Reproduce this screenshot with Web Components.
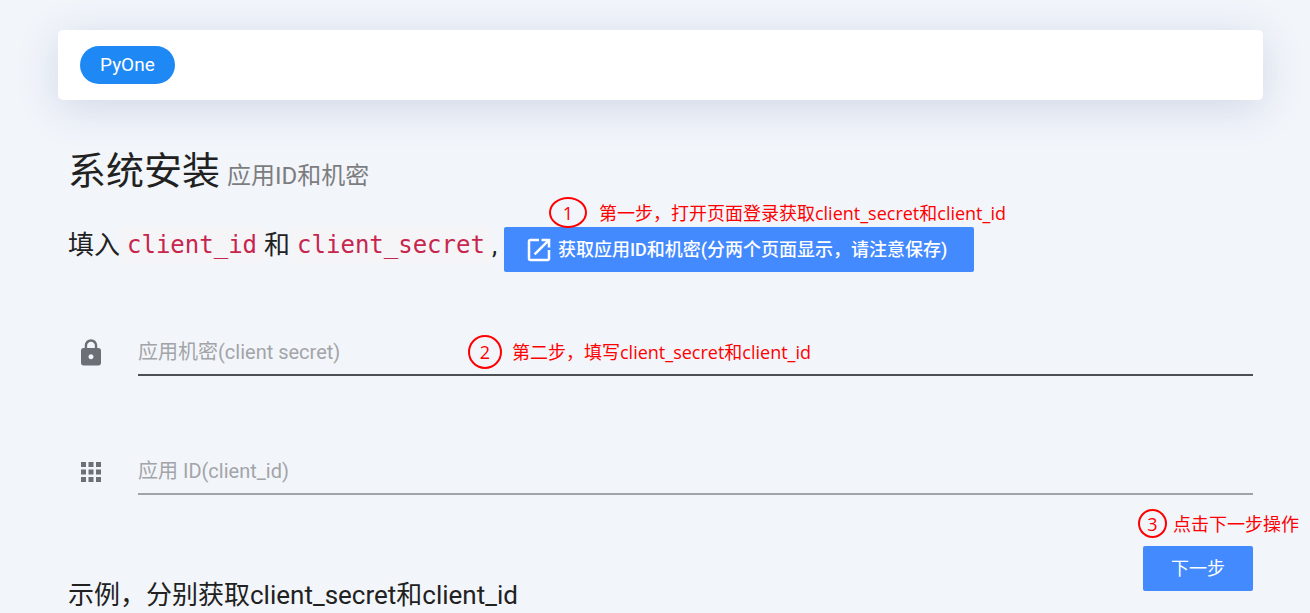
<!DOCTYPE html>
<html lang="zh-CN">
<head>
<meta charset="utf-8">
<meta name="viewport" content="width=device-width, initial-scale=1">
<title>PyOne</title>
<style>
  body {
    margin: 0;
    background: #f2f5fa;
    color: #212121;
    font-family: Roboto, "Noto Sans CJK SC", sans-serif;
    --accent: #448aff;
    --brand: #1e88f5;
    --note: #ff0000;
    --note-font: "Open Sans", "Noto Sans CJK SC", sans-serif;
  }
</style>
</head>
<body>
<install-page></install-page>

<script>
const define = (name, html, setup) => {
  const template = document.createElement('template');
  template.innerHTML = html;
  customElements.define(name, class extends HTMLElement {
    constructor() {
      super();
      this.attachShadow({ mode: 'open' }).append(template.content.cloneNode(true));
    }
    connectedCallback() {
      if (setup) setup(this, this.shadowRoot);
    }
  });
};

define('nav-card', `
  <style>
    :host { display: block; }
    nav {
      display: flex; align-items: center;
      padding: 16px 22px; background: #fff; border-radius: 5px;
      box-shadow: 0 8px 40px rgba(60, 90, 150, .18);
    }
    a {
      padding: 0 20px; border-radius: 19px; background: var(--brand);
      color: #fff; font-size: 19px; line-height: 38px; text-decoration: none;
    }
  </style>
  <nav><a href="#"><slot></slot></a></nav>`);

define('page-title', `
  <style>
    :host { display: block; }
    h1 { margin: 0; font-size: 38px; line-height: 48px; font-weight: 400; white-space: nowrap; }
    small { margin-left: 7px; font-size: 24px; color: #7c7d80; }
  </style>
  <h1><slot></slot><small><slot name="sub"></slot></small></h1>`);

define('code-word', `
  <style>
    :host { display: inline-block; }
    code {
      display: block; padding: 0 7px; border-radius: 4px; background: #f5f5f8; color: #c7254e;
      font: 24px/36px "DejaVu Sans Mono", monospace;
    }
  </style>
  <code><slot></slot></code>`);

define('link-button', `
  <style>
    :host { display: block; }
    a {
      display: flex; align-items: center; gap: 4px;
      height: 45px; padding: 0 27px 0 20px; border-radius: 2px; box-sizing: border-box;
      background: var(--accent); color: #fff; font-size: 18px; font-weight: 500;
      text-decoration: none; white-space: nowrap;
    }
    svg { width: 30px; height: 30px; fill: currentColor; }
  </style>
  <a href="#">
    <svg viewBox="0 0 24 24" aria-hidden="true"><path d="M19 19H5V5h7V3H5c-1.11 0-2 .9-2 2v14c0 1.1.89 2 2 2h14c1.1 0 2-.9 2-2v-7h-2v7zM14 3v2h3.59l-9.83 9.83 1.41 1.41L19 6.41V10h2V3h-7z"/></svg>
    <span><slot></slot></span>
  </a>`);

define('action-button', `
  <style>
    :host { display: block; }
    button {
      width: 110px; height: 45px; padding: 0 0 3px; border: 0; border-radius: 2px;
      background: var(--accent); color: #fff; font: inherit; font-size: 18px;
    }
  </style>
  <button type="button"><slot></slot></button>`);

define('text-field', `
  <style>
    :host { display: block; }
    .row { display: flex; align-items: center; gap: 32px; padding-left: 8px; }
    ::slotted(svg) { display: block; width: 30px; height: 30px; fill: #6d6f76; }
    input {
      flex: 1; min-width: 0; height: 47px; box-sizing: border-box; padding: 0;
      border: 0; border-bottom: 2px solid #a0a3a8; border-radius: 0; outline: 0;
      background: none; color: inherit; font: inherit; font-size: 20px;
    }
    :host([active]) input { border-bottom-color: #4c4f54; }
    input::placeholder { color: #a3a4a8; opacity: 1; }
  </style>
  <div class="row"><slot name="icon"></slot><input type="text"></div>`,
  (host, root) => {
    const input = root.querySelector('input');
    input.placeholder = host.getAttribute('label');
    input.setAttribute('aria-label', host.getAttribute('label'));
  });

define('step-note', `
  <style>
    :host { display: flex; align-items: center; gap: 12px; color: var(--note);
      font: 18px/24px var(--note-font); white-space: nowrap; }
    b {
      display: grid; place-items: center; box-sizing: border-box;
      width: var(--ring-w, 34px); height: var(--ring-h, 34px);
      border: 2px solid; border-radius: 50%; font-weight: 400;
    }
  </style>
  <b></b><span><slot></slot></span>`,
  (host, root) => { root.querySelector('b').textContent = host.getAttribute('step'); });

define('install-page', `
  <style>
    :host { display: block; padding: 30px 47px 0 58px; }
    main { padding: 47px 10px 0; }
    .intro { display: flex; align-items: flex-start; margin: 27px 0 57px; font-size: 26px; line-height: 36px; white-space: nowrap; }
    .comma { width: 12px; }
    .fields { display: grid; gap: 72px; }
    .foot { display: flex; justify-content: space-between; align-items: flex-start; margin-top: 51px; }
    h2 { margin: 32px 0 0; font-size: 26px; line-height: 34px; font-weight: 400; }
    .anchor { position: relative; }
    step-note { position: absolute; }
    .one { left: 45px; bottom: 44px; --ring-w: 38px; --ring-h: 31px; }
    .two { left: 400px; top: 6px; gap: 10px; }
    .three { right: -46px; bottom: 53px; gap: 6px; --ring-w: 29px; --ring-h: 29px; }
  </style>
  <nav-card>PyOne</nav-card>
  <main>
    <page-title>系统安装<span slot="sub">应用ID和机密</span></page-title>
    <div class="intro">
      <span>填入</span><code-word>client_id</code-word><span>和</span><code-word>client_secret</code-word><span class="comma">,</span>
      <div class="anchor">
        <link-button>获取应用ID和机密(分两个页面显示，请注意保存)</link-button>
        <step-note class="one" step="1">第一步，打开页面登录获取client_secret和client_id</step-note>
      </div>
    </div>
    <div class="fields">
      <div class="anchor">
        <text-field active label="应用机密(client secret)">
          <svg slot="icon" viewBox="0 0 24 24" aria-hidden="true"><path d="M18 8h-1V6c0-2.76-2.24-5-5-5S7 3.240 7 6v2H6c-1.100 0-2 .9-2 2v10c0 1.100.9 2 2 2h12c1.100 0 2-.9 2-2V10c0-1.100-.9-2-2-2zm-6 9c-1.100 0-2-.9-2-2s.9-2 2-2 2 .9 2 2-.9 2-2 2zm3.100-9H8.900V6c0-1.710 1.390-3.100 3.100-3.100s3.100 1.390 3.100 3.100v2z"/></svg>
        </text-field>
        <step-note class="two" step="2">第二步，填写client_secret和client_id</step-note>
      </div>
      <text-field label="应用 ID(client_id)">
        <svg slot="icon" viewBox="0 0 24 24" aria-hidden="true"><path d="M4 8h4V4H4v4zm6 12h4v-4h-4v4zm-6 0h4v-4H4v4zm0-6h4v-4H4v4zm6 0h4v-4h-4v4zm6-10v4h4V4h-4zm-6 4h4V4h-4v4zm6 6h4v-4h-4v4zm0 6h4v-4h-4v4z"/></svg>
      </text-field>
    </div>
    <div class="foot">
      <h2>示例，分别获取client_secret和client_id</h2>
      <div class="anchor">
        <action-button>下一步</action-button>
        <step-note class="three" step="3">点击下一步操作</step-note>
      </div>
    </div>
  </main>`);
</script>
</body>
</html>
